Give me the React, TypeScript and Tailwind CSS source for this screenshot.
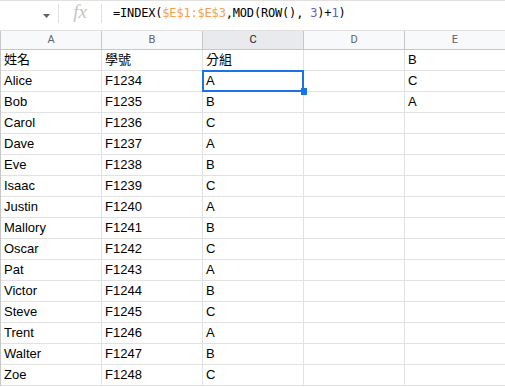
import React from "react";

const rows: [string, string, string, string][] = [
  ["姓名", "學號", "分組", "B"],
  ["Alice", "F1234", "A", "C"],
  ["Bob", "F1235", "B", "A"],
  ["Carol", "F1236", "C", ""],
  ["Dave", "F1237", "A", ""],
  ["Eve", "F1238", "B", ""],
  ["Isaac", "F1239", "C", ""],
  ["Justin", "F1240", "A", ""],
  ["Mallory", "F1241", "B", ""],
  ["Oscar", "F1242", "C", ""],
  ["Pat", "F1243", "A", ""],
  ["Victor", "F1244", "B", ""],
  ["Steve", "F1245", "C", ""],
  ["Trent", "F1246", "A", ""],
  ["Walter", "F1247", "B", ""],
  ["Zoe", "F1248", "C", ""],
];

const font = { fontFamily: '"Liberation Sans", Arial, "Noto Sans CJK TC", sans-serif' };

export default function App() {
  return (
    <div className="w-[505px] h-[387px] overflow-hidden bg-white" style={font}>
      {/* formula bar */}
      <div className="h-[31px] flex items-center border-t border-b border-[#e1e1e1] bg-white">
        <div className="w-[58px] h-full flex items-center justify-end pr-[8px]">
          <svg width="7" height="4" viewBox="0 0 7 4">
            <path d="M0 0 L7 0 L3.5 4 Z" fill="#5f6368" />
          </svg>
        </div>
        <div className="w-px h-[19px] bg-[#e1e1e1] self-start mt-[3px]" />
        <div className="w-[42px] flex items-center justify-center text-[19px] italic text-[#c4c4c4] leading-none -mt-[8px]" style={{ fontFamily: '"Liberation Serif", serif' }}>
          fx
        </div>
        <div className="w-px h-[19px] bg-[#e1e1e1] self-start mt-[3px]" />
        <div className="pl-[11px] text-[12px] tracking-[-0.18px] text-black -mt-[6px] whitespace-pre" style={{ fontFamily: '"DejaVu Sans Mono", monospace' }}>
          =INDEX(<span className="text-[#f6a04d]">$E$1:$E$3</span>,MOD(ROW(), <span className="text-[#5b62c9]">3</span>)+<span className="text-[#5b62c9]">1</span>)
        </div>
      </div>
      {/* grid */}
      <div className="border-l border-[#c7c7c7]">
        <div className="grid grid-cols-[101px_101px_101px_101px_101px] h-[19px] bg-[#f8f9fa] border-b border-[#c7c7c7]">
          {["A", "B", "C", "D", "E"].map((c) => (
            <div
              key={c}
              className={
                c === "C"
                  ? "border-r border-[#c7c7c7] bg-[#e8eaed] text-[#202124] flex items-center justify-center text-[11px]"
                  : "border-r border-[#c7c7c7] text-[#5f6368] flex items-center justify-center text-[11px]"
              }
              style={{ fontFamily: 'Roboto, "Liberation Sans", sans-serif' }}
            >
              {c}
            </div>
          ))}
        </div>
        {rows.map((r, i) => (
          <div key={i} className="grid grid-cols-[101px_101px_101px_101px_101px] h-[21px]">
            {[r[0], r[1], r[2], "", r[3]].map((v, j) => (
              <div
                key={j}
                className="relative border-r border-b border-[#e2e2e2] pl-[3px] text-[13px] text-black leading-[20px] whitespace-nowrap"
              >
                {v}
                {i === 1 && j === 2 && (
                  <>
                    <div className="absolute -left-px -top-px w-[102px] h-[22px] border-2 border-[#1a73e8]" />
                    <div className="absolute z-10 -right-[4px] -bottom-[4px] w-[6px] h-[7px] bg-[#1a73e8]" />
                  </>
                )}
              </div>
            ))}
          </div>
        ))}
      </div>
    </div>
  );
}
